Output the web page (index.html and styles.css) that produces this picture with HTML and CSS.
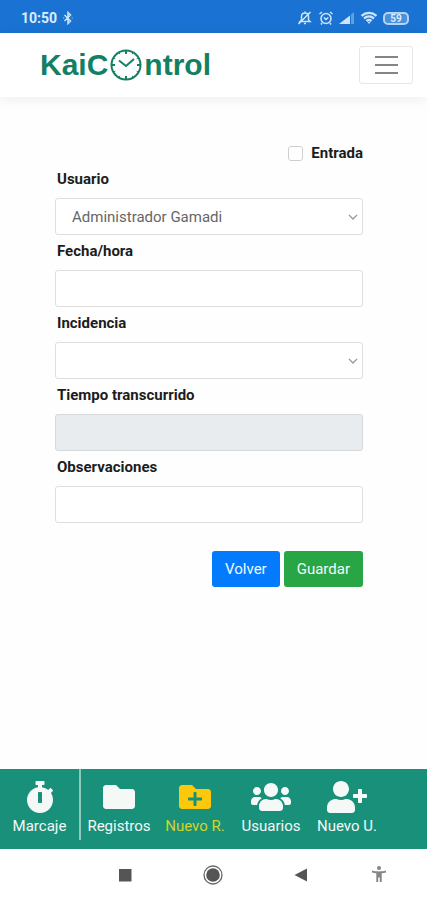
FILE: index.html
```html
<!DOCTYPE html>
<html lang="es">
<head>
<meta charset="utf-8">
<meta name="viewport" content="width=device-width, initial-scale=1">
<title>KaiControl</title>
<link rel="stylesheet" href="styles.css">
</head>
<body>
<div class="status">
  <span class="status-time">10:50</span>
  <svg class="bluetooth" width="10" height="14" viewBox="0 0 10 14"><path d="M1.500 4l6 6L5 12.500V1.500L7.500 4l-6 6M.5 7h.6M8.800 7h.6"/></svg>
  <div class="status-icons">
    <svg width="16" height="16" viewBox="0 0 16 16"><path d="M3 11.500h10L11.500 10V6.500C11.500 4 10 3 8 3S4.500 4 4.500 6.500V10zM7 13.500h2M8 1.500V3M13.500 2l-12 12"/></svg>
    <svg width="16" height="16" viewBox="0 0 16 16"><circle cx="8" cy="8.500" r="5"/><path d="M5.800 7.500L8 9.500l2.300-2M1.500 4L4 2M14.500 4L12 2M4 13l-1 1.500M12 13l1 1.500"/></svg>
    <svg width="16" height="12" viewBox="0 0 16 12"><path class="solid" d="M0 12L11 3.500V12z"/><path class="faint" d="M12 12h3V0l-3 2.500z"/></svg>
    <svg width="18" height="14" viewBox="0 0 18 14"><path class="wifi" d="M1.500 4.800C6 1 12 1 16.500 4.800M4 7.500c3-2.500 7-2.500 10 0M6.500 10c1.500-1.200 3.500-1.200 5 0"/><path class="solid" d="M7.500 11L9 13l1.500-2z"/></svg>
    <span class="battery">59</span>
  </div>
</div>

<header class="topbar">
  <a class="logo" href="#" aria-label="KaiControl">
    <span>KaiC</span>
    <svg width="32" height="32" viewBox="0 0 32 32"><circle cx="16" cy="16" r="14.500"/><path d="M9 11.500l7 5.500 8-7"/><path class="ticks" d="M16 1.500V5M16 27v3.500M1.500 16H5M27 16h3.500"/><path class="minor" d="M23.200 3.400l-1 1.800M28.500 8.800l-1.800 1M8.800 3.400l1 1.800M3.500 8.800l1.800 1M23.200 28.600l-1-1.800M28.500 23.200l-1.800-1M8.800 28.600l1-1.800M3.500 23.200l1.800-1"/></svg>
    <span>ntrol</span>
  </a>
  <button class="menu" type="button" aria-label="Menú"><span></span><span></span><span></span></button>
</header>

<main>
  <form class="form">
    <label class="check"><input type="checkbox">Entrada</label>
    <div class="field">
      <label for="usuario">Usuario</label>
      <select id="usuario"><option>Administrador Gamadi</option></select>
    </div>
    <div class="field">
      <label for="fecha">Fecha/hora</label>
      <input id="fecha" type="text">
    </div>
    <div class="field">
      <label for="incidencia">Incidencia</label>
      <select id="incidencia"><option></option></select>
    </div>
    <div class="field">
      <label for="tiempo">Tiempo transcurrido</label>
      <input id="tiempo" type="text" disabled>
    </div>
    <div class="field">
      <label for="observaciones">Observaciones</label>
      <input id="observaciones" type="text">
    </div>
    <div class="actions">
      <button class="btn btn-back" type="button">Volver</button>
      <button class="btn btn-save" type="button">Guardar</button>
    </div>
  </form>
</main>

<nav class="tabs">
  <a class="tab tab-first" href="#">
    <svg width="28" height="32" viewBox="0 0 448 512"><path d="M432 304c0 114.900-93.100 208-208 208S16 418.900 16 304c0-104 76.300-190.200 176-205.500V64h-28c-6.600 0-12-5.400-12-12V12c0-6.600 5.400-12 12-12h120c6.600 0 12 5.400 12 12v40c0 6.600-5.400 12-12 12h-28v34.500c37.500 5.800 71.700 21.600 99.700 44.600l27.500-27.500c4.700-4.700 12.300-4.700 17 0l28.300 28.300c4.700 4.700 4.700 12.300 0 17l-29.400 29.400-.6.6C419.700 223.300 432 262.200 432 304zm-176 36V188.500c0-6.600-5.400-12-12-12h-40c-6.600 0-12 5.400-12 12V340c0 6.600 5.400 12 12 12h40c6.600 0 12-5.400 12-12z"/></svg>
    Marcaje
  </a>
  <a class="tab" href="#">
    <svg width="32" height="32" viewBox="0 0 512 512"><path d="M464 128H272l-64-64H48C21.490 64 0 85.490 0 112v288c0 26.510 21.490 48 48 48h416c26.510 0 48-21.490 48-48V176c0-26.510-21.490-48-48-48z"/></svg>
    Registros
  </a>
  <a class="tab tab-active" href="#" aria-current="page">
    <svg width="32" height="32" viewBox="0 0 512 512"><path d="M464 128H272l-64-64H48C21.490 64 0 85.490 0 112v288c0 26.510 21.490 48 48 48h416c26.510 0 48-21.490 48-48V176c0-26.510-21.490-48-48-48zm-96 168c0 8.840-7.160 16-16 16h-72v72c0 8.840-7.160 16-16 16h-16c-8.840 0-16-7.160-16-16v-72h-72c-8.840 0-16-7.160-16-16v-16c0-8.840 7.160-16 16-16h72v-72c0-8.840 7.160-16 16-16h16c8.840 0 16 7.160 16 16v72h72c8.840 0 16 7.160 16 16v16z"/></svg>
    Nuevo R.
  </a>
  <a class="tab" href="#">
    <svg width="40" height="32" viewBox="0 0 640 512"><path d="M96 224c35.300 0 64-28.700 64-64s-28.700-64-64-64-64 28.700-64 64 28.700 64 64 64zm448 0c35.300 0 64-28.700 64-64s-28.700-64-64-64-64 28.700-64 64 28.700 64 64 64zm32 32h-64c-17.600 0-33.500 7.100-45.100 18.600 40.300 22.100 68.900 62 75.100 109.400h66c17.700 0 32-14.300 32-32v-32c0-35.300-28.700-64-64-64zm-256 0c61.900 0 112-50.100 112-112S381.900 32 320 32 208 82.100 208 144s50.100 112 112 112zm76.800 32h-8.300c-20.800 10-43.900 16-68.500 16s-47.600-6-68.500-16h-8.300C179.600 288 128 339.600 128 403.200V432c0 26.500 21.500 48 48 48h288c26.500 0 48-21.500 48-48v-28.800c0-63.600-51.600-115.200-115.200-115.200zm-223.700-13.400C161.500 263.100 145.600 256 128 256H64c-35.300 0-64 28.700-64 64v32c0 17.700 14.300 32 32 32h65.900c6.300-47.400 34.900-87.300 75.200-109.400z"/></svg>
    Usuarios
  </a>
  <a class="tab" href="#">
    <svg width="40" height="32" viewBox="0 0 640 512"><path d="M624 208h-64v-64c0-8.800-7.200-16-16-16h-32c-8.800 0-16 7.200-16 16v64h-64c-8.800 0-16 7.200-16 16v32c0 8.800 7.200 16 16 16h64v64c0 8.800 7.200 16 16 16h32c8.800 0 16-7.200 16-16v-64h64c8.800 0 16-7.200 16-16v-32c0-8.800-7.200-16-16-16zm-400 48c70.700 0 128-57.300 128-128S294.700 0 224 0 96 57.300 96 128s57.300 128 128 128zm89.600 32h-16.700c-22.200 10.200-46.900 16-72.900 16s-50.600-5.800-72.900-16h-16.700C60.200 288 0 348.200 0 422.400V464c0 26.500 21.500 48 48 48h352c26.500 0 48-21.500 48-48v-41.600c0-74.200-60.200-134.400-134.400-134.400z"/></svg>
    Nuevo U.
  </a>
</nav>

<div class="system">
  <button type="button" aria-label="Recientes"><svg width="20" height="20" viewBox="0 0 20 20"><path d="M4 4h12.500v12.500H4z"/></svg></button>
  <button type="button" aria-label="Inicio"><svg width="20" height="20" viewBox="0 0 20 20"><circle class="ring" cx="10" cy="10" r="9"/><circle cx="10" cy="10" r="6.800"/></svg></button>
  <button type="button" aria-label="Atrás"><svg width="20" height="20" viewBox="0 0 20 20"><path d="M3.500 10L16 3.500v13z"/></svg></button>
  <button class="access" type="button" aria-label="Accesibilidad"><svg width="20" height="20" viewBox="0 0 20 20"><circle cx="10" cy="3" r="2"/><path d="M3 5.500c4 1.200 10 1.200 14 0v2c-1.500.4-3 .7-4.300.8V17h-1.900v-4.500H9.200V17H7.300V8.300C6 8.200 4.500 7.900 3 7.500z"/></svg></button>
</div>
</body>
</html>
```

FILE: styles.css
```css
* { box-sizing: border-box; }

body {
  margin: 0;
  min-height: 100vh;
  display: flex;
  flex-direction: column;
  background: #fefefe;
  color: #212121;
  font: 15px/20px Roboto, sans-serif;
}

button { font: inherit; cursor: pointer; }

.status {
  display: flex;
  align-items: center;
  height: 33px;
  padding: 3px 18px 0 21px;
  background: #1a73d2;
  color: #dcecfb;
}
.status-time { font-size: 14px; font-weight: 700; }
.status svg { fill: none; stroke: #cfe4f8; stroke-width: 1.5; }
.status .bluetooth { margin-left: 6px; }
.status .solid { fill: #cfe4f8; stroke: none; }
.status .faint { fill: #5f9fe0; stroke: none; }
.status .wifi { stroke-width: 2.3; }
.status-icons {
  display: flex;
  align-items: center;
  gap: 5px;
  margin-left: auto;
}
.battery {
  width: 26px;
  height: 13px;
  border: 2px solid #b5d4f3;
  border-radius: 5px;
  background: #4a90dc;
  font-size: 10px;
  font-weight: 700;
  line-height: 9px;
  text-align: center;
}

.topbar {
  display: flex;
  align-items: center;
  justify-content: space-between;
  height: 64px;
  padding: 0 14px 0 40px;
  background: #fff;
  box-shadow: 0 2px 12px rgba(0, 0, 0, .07);
}
.logo {
  display: flex;
  align-items: center;
  gap: 2px;
  color: #138064;
  font: 700 30px/36px "Liberation Sans", sans-serif;
  text-decoration: none;
}
.logo svg {
  fill: none;
  stroke: currentColor;
  stroke-width: 2;
}
.logo .ticks { stroke-width: 2; }
.logo .minor { stroke-width: 1; }
.menu {
  display: flex;
  flex-direction: column;
  align-items: center;
  justify-content: center;
  gap: 6px;
  width: 54px;
  height: 38px;
  padding: 0;
  border: 1px solid #e6e6e6;
  border-radius: 3px;
  background: #fff;
}
.menu span {
  width: 23px;
  height: 2px;
  background: #858585;
}

main {
  flex: 1;
  padding: 46px 64px 32px 55px;
}
.form { display: flex; flex-direction: column; }
.form label { color: #1c1c1c; font-weight: 700; }
.check {
  display: flex;
  align-items: center;
  align-self: flex-end;
  gap: 8px;
}
.check input {
  appearance: none;
  width: 15px;
  height: 15px;
  margin: 0;
  border: 1px solid #cfcfcf;
  border-radius: 3px;
  background: #fff;
}
.field {
  display: flex;
  flex-direction: column;
  gap: 9px;
  padding-top: 6px;
}
.field label { padding-left: 2px; }
.field input,
.field select {
  appearance: none;
  width: 100%;
  height: 37px;
  margin: 0;
  padding: 0 16px;
  border: 1px solid #dedede;
  border-radius: 3px;
  background: #fff;
  color: #666;
  font: inherit;
}
.field select {
  background: #fff url("data:image/svg+xml,%3Csvg xmlns='http://www.w3.org/2000/svg' width='10' height='6' fill='none' stroke='%23999' stroke-width='1.3'%3E%3Cpath d='M1 1l4 4 4-4'/%3E%3C/svg%3E") no-repeat right 4px center;
}
.field input:disabled { background: #e9ecef; border-color: #d6dadd; }
.actions {
  display: flex;
  justify-content: flex-end;
  gap: 4px;
  margin-top: 28px;
}
.btn {
  height: 36px;
  padding: 0 13px;
  border: 0;
  border-radius: 3px;
  color: #f4f9ff;
}
.btn-back { background: #037bfc; }
.btn-save { background: #28a544; }

.tabs {
  display: flex;
  height: 80px;
  padding-bottom: 9px;
  background: #19917a;
}
.tab {
  display: flex;
  flex-direction: column;
  align-items: center;
  gap: 3px;
  width: 76px;
  padding-top: 12px;
  color: #f4f8f7;
  text-decoration: none;
  white-space: nowrap;
}
.tab svg { fill: currentColor; }
.tab-first { width: 81px; border-right: 2px solid #8cc8bc; }
.tab-active { color: #d2d32b; }
.tab-active svg { fill: #fbc80b; }

.system {
  display: grid;
  grid-template-columns: 88fr 88fr 88fr 70fr;
  height: 51px;
  padding: 0 3% 0 19%;
  background: #fff;
}
.system button {
  display: flex;
  align-items: center;
  justify-content: center;
  padding: 0;
  border: 0;
  background: none;
}
.system svg { fill: #555; }
.system .ring { fill: none; stroke: #666; stroke-width: 1.3; }
.system .access svg { fill: #858585; }
```
